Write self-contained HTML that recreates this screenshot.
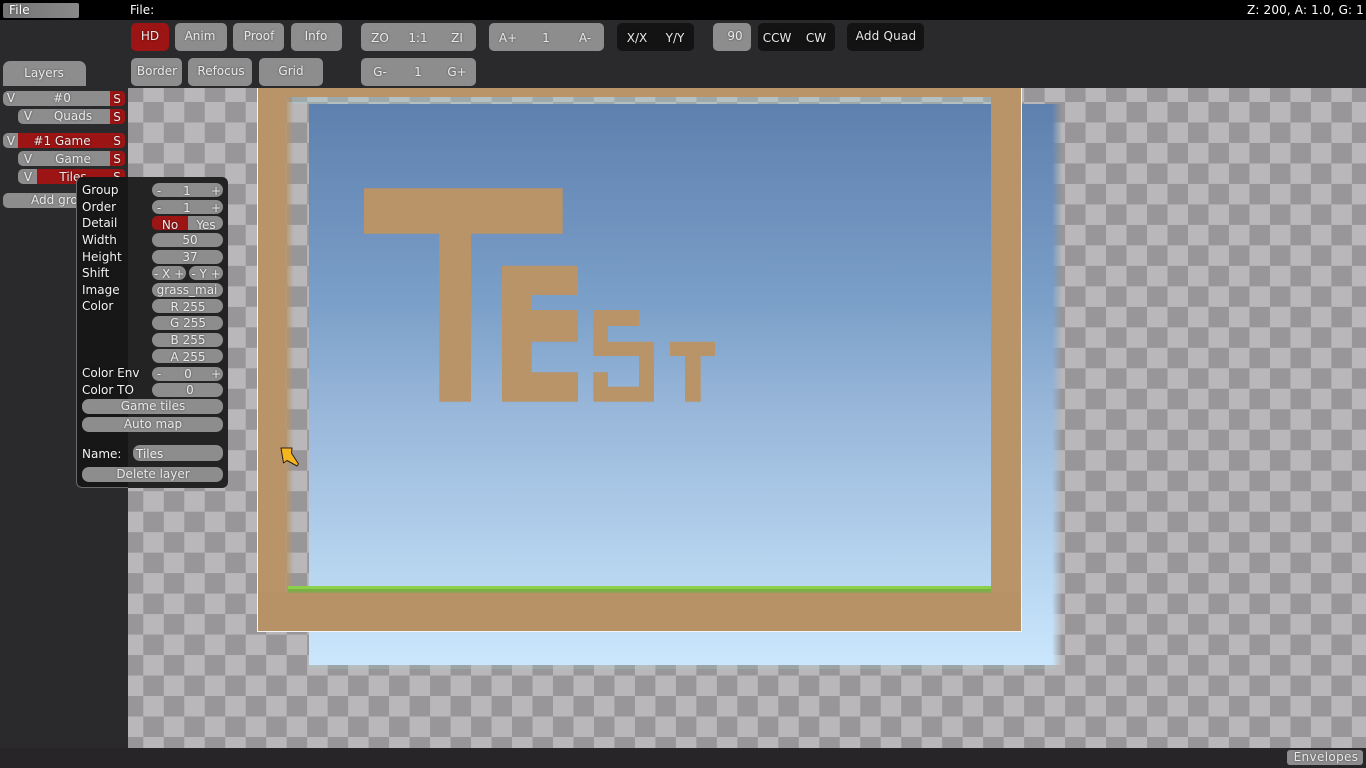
<!DOCTYPE html>
<html><head><meta charset="utf-8"><title>Editor</title>
<style>
html,body{margin:0;padding:0;width:1366px;height:768px;overflow:hidden;background:#2a292b}
body{position:relative;font:12px "DejaVu Sans",sans-serif;color:#e9e9e9}
div{position:absolute;box-sizing:border-box}
.t,.l{position:absolute;white-space:nowrap;line-height:14px;text-shadow:0 0 2px rgba(0,0,0,.55)}
.t{transform:translate(-50%,calc(-50% + 1px))}
.l{transform:translateY(calc(-50% + 1px));color:#f2f2f2}
.g{background:#8e8d8e}.r{background:#9c1414}.k{background:#131314}
.rd{border-radius:5px}.p{border-radius:7px}
</style></head><body>
<div style="left:128px;top:88px;width:1238px;height:660px;background-image:conic-gradient(#b9b7b9 25%,#989698 0 50%,#b9b7b9 0 75%,#989698 0);background-size:40.98px 40.98px;background-position:-5.2px -6.5px"></div>
<div style="left:292px;top:97px;width:699px;height:7px;background:rgba(170,215,215,.3)"></div>
<div style="left:309px;top:664px;width:747px;height:5px;background:rgba(170,215,215,.22)"></div>
<div style="left:309px;top:104px;width:753px;height:561px;background:linear-gradient(#5e80ae 0,#7a9fc8 35%,#96b5d8 53%,#bcd9f3 87%,#cbe7fd 100%);-webkit-mask-image:linear-gradient(to right,#000 calc(100% - 10px),transparent)"></div>
<svg style="position:absolute;left:0;top:0" width="1366" height="768" viewBox="0 0 1366 768">
<defs><linearGradient id="bl"><stop offset="0" stop-color="#b89468"/><stop offset=".74" stop-color="#b89468"/><stop offset="1" stop-color="#b89468" stop-opacity="0"/></linearGradient></defs>
<rect x="258" y="97" width="36" height="496" fill="url(#bl)"/>
<rect x="258" y="88" width="763" height="9" fill="#b89468"/>
<rect x="991" y="88" width="30" height="543" fill="#b89468"/>
<rect x="258" y="592" width="763" height="39" fill="#b79267"/>
<rect x="288" y="586" width="703" height="3" fill="#8ccf4a"/>
<rect x="288" y="589" width="703" height="2.5" fill="#78b044"/>
<rect x="288" y="591.5" width="703" height="1.5" fill="#96a05a"/>
<path d="M257.5 88V631.5H1021.5V88" fill="none" stroke="#f6f6f6" stroke-width="1"/>
<g fill="#b89468">
<path d="M364 188.3H562.7V233.7H471V401.7H439.3V233.7H364Z"/>
<path d="M502 265.7H578V295H531.7V310H578V341.7H531.7V372.3H578V401.7H502Z"/>
<path d="M593.3 310H639V326H608V341.7H654V401.7H593.3V372.3H608V386.7H639V356H593.3Z"/>
<path d="M670 341.7H715V356H700.7V401.7H685V356H670Z"/>
</g>
<path d="M281 448L292 448L291.5 453L298.5 464L297 466L287 460.5L283.5 463Z" fill="#f6b41f" stroke="#2a2215" stroke-width="1" stroke-linejoin="round"/>
</svg>

<div style="left:0;top:0;width:1366px;height:20px;background:#000"></div>
<div style="left:0;top:748px;width:1366px;height:20px;background:#272528"></div>
<div style="left:3px;top:3px;width:76px;height:15px;background:linear-gradient(90deg,#757475,#8a898a);border-radius:2px"></div>
<span class="l" style="left:9px;top:9px;color:#fff;letter-spacing:.2px">File</span>
<span class="l" style="left:130px;top:9px;color:#fff">File:</span>
<span class="l" style="left:1247px;top:9px;color:#fff;letter-spacing:.15px">Z: 200, A: 1.0, G: 1</span>

<div class="r rd" style="left:131px;top:23px;width:38px;height:28px"></div><span class="t" style="left:150px;top:35px">HD</span>
<div class="g rd" style="left:175px;top:23px;width:52px;height:28px"></div><span class="t" style="left:200px;top:35px">Anim</span>
<div class="g rd" style="left:233px;top:23px;width:51px;height:28px"></div><span class="t" style="left:259px;top:35px">Proof</span>
<div class="g rd" style="left:291px;top:23px;width:51px;height:28px"></div><span class="t" style="left:316px;top:35px">Info</span>
<div class="g rd" style="left:131px;top:58px;width:51px;height:28px"></div><span class="t" style="left:157px;top:70px">Border</span>
<div class="g rd" style="left:188px;top:58px;width:64px;height:28px"></div><span class="t" style="left:221px;top:70px">Refocus</span>
<div class="g rd" style="left:259px;top:58px;width:64px;height:28px"></div><span class="t" style="left:291px;top:70px">Grid</span>

<div class="g rd" style="left:361px;top:23px;width:115px;height:28px"></div>
<span class="t" style="left:380px;top:37px">ZO</span><span class="t" style="left:418px;top:37px">1:1</span><span class="t" style="left:457px;top:37px">ZI</span>
<div class="g rd" style="left:361px;top:58px;width:115px;height:28px"></div>
<span class="t" style="left:380px;top:71px">G-</span><span class="t" style="left:418px;top:71px">1</span><span class="t" style="left:457px;top:71px">G+</span>
<div class="g rd" style="left:489px;top:23px;width:115px;height:28px"></div>
<span class="t" style="left:508px;top:37px">A+</span><span class="t" style="left:546px;top:37px">1</span><span class="t" style="left:585px;top:37px">A-</span>
<div class="k rd" style="left:617px;top:23px;width:77px;height:28px"></div>
<span class="t" style="left:637px;top:37px">X/X</span><span class="t" style="left:675px;top:37px">Y/Y</span>
<div class="g rd" style="left:713px;top:23px;width:38px;height:28px"></div><span class="t" style="left:735px;top:35px">90</span>
<div class="k rd" style="left:758px;top:23px;width:77px;height:28px"></div>
<span class="t" style="left:777px;top:37px">CCW</span><span class="t" style="left:816px;top:37px">CW</span>
<div class="k rd" style="left:847px;top:23px;width:77px;height:28px"></div><span class="t" style="left:886px;top:35px;letter-spacing:.2px">Add Quad</span>

<div class="g" style="left:3px;top:61px;width:83px;height:25px;border-radius:7px 7px 0 0"></div><span class="t" style="left:44px;top:72px">Layers</span>

<div class="g rd" style="left:3px;top:91px;width:122px;height:15px"></div><div class="r" style="left:110px;top:91px;width:15px;height:15px;border-radius:0 4px 4px 0"></div>
<span class="t" style="left:11px;top:97px">V</span><span class="t" style="left:62px;top:97px">#0</span><span class="t" style="left:117px;top:98px">S</span>
<div class="g rd" style="left:18px;top:109px;width:107px;height:15px"></div><div class="r" style="left:110px;top:109px;width:15px;height:15px;border-radius:0 4px 4px 0"></div>
<span class="t" style="left:28px;top:115px">V</span><span class="t" style="left:73px;top:115px">Quads</span><span class="t" style="left:117px;top:116px">S</span>
<div class="g rd" style="left:3px;top:133px;width:30px;height:15px"></div><div class="r" style="left:18px;top:133px;width:107px;height:15px;border-radius:0 4px 4px 0"></div>
<span class="t" style="left:11px;top:140px">V</span><span class="t" style="left:62px;top:140px">#1 Game</span><span class="t" style="left:117px;top:140px">S</span>
<div class="g rd" style="left:18px;top:151px;width:107px;height:15px"></div><div class="r" style="left:110px;top:151px;width:15px;height:15px;border-radius:0 4px 4px 0"></div>
<span class="t" style="left:28px;top:158px">V</span><span class="t" style="left:73px;top:158px">Game</span><span class="t" style="left:117px;top:158px">S</span>
<div class="g rd" style="left:18px;top:169px;width:30px;height:15px"></div><div class="r" style="left:37px;top:169px;width:88px;height:15px;border-radius:0 4px 4px 0"></div>
<span class="t" style="left:28px;top:176px">V</span><span class="t" style="left:73px;top:176px">Tiles</span><span class="t" style="left:117px;top:176px">S</span>
<div class="g rd" style="left:3px;top:193px;width:122px;height:15px"></div><span class="t" style="left:62px;top:199px">Add group</span>

<div style="left:76px;top:177px;width:52px;height:311px;background:#171718;border-radius:6px 0 0 6px;border-left:1px solid #6a696a;border-bottom:1px solid #6a696a"></div>
<div style="left:128px;top:177px;width:100px;height:311px;background:#232324;border-radius:0 6px 6px 0"></div>

<span class="l" style="left:82px;top:189px">Group</span><div class="g p" style="left:152px;top:183px;width:71px;height:14px"></div>
<span class="t" style="left:159px;top:190px">-</span><span class="t" style="left:187px;top:190px">1</span><span class="t" style="left:216px;top:190px">+</span>
<span class="l" style="left:82px;top:206px">Order</span><div class="g p" style="left:152px;top:200px;width:71px;height:14px"></div>
<span class="t" style="left:159px;top:207px">-</span><span class="t" style="left:187px;top:207px">1</span><span class="t" style="left:216px;top:207px">+</span>
<span class="l" style="left:82px;top:222px">Detail</span><div class="g p" style="left:152px;top:216px;width:71px;height:14px"></div><div class="r" style="left:152px;top:216px;width:36px;height:14px;border-radius:5px 0 0 5px"></div>
<span class="t" style="left:170px;top:224px">No</span><span class="t" style="left:206px;top:224px">Yes</span>
<span class="l" style="left:82px;top:239px">Width</span><div class="g p" style="left:152px;top:233px;width:71px;height:14px"></div><span class="t" style="left:190px;top:239px">50</span>
<span class="l" style="left:82px;top:256px">Height</span><div class="g p" style="left:152px;top:250px;width:71px;height:14px"></div><span class="t" style="left:190px;top:256px">37</span>
<span class="l" style="left:82px;top:272px">Shift</span><div class="g p" style="left:152px;top:266px;width:34px;height:14px"></div><div class="g p" style="left:189px;top:266px;width:34px;height:14px"></div>
<span class="t" style="left:169px;top:273px">- X +</span><span class="t" style="left:206px;top:273px">- Y +</span>
<span class="l" style="left:82px;top:289px">Image</span><div class="g p" style="left:152px;top:283px;width:71px;height:14px"></div><span class="t" style="left:187px;top:289px">grass_mai</span>
<span class="l" style="left:82px;top:305px">Color</span><div class="g p" style="left:152px;top:299px;width:71px;height:14px"></div><span class="t" style="left:188px;top:306px">R 255</span>
<div class="g p" style="left:152px;top:316px;width:71px;height:14px"></div><span class="t" style="left:188px;top:322px">G 255</span>
<div class="g p" style="left:152px;top:333px;width:71px;height:14px"></div><span class="t" style="left:188px;top:339px">B 255</span>
<div class="g p" style="left:152px;top:349px;width:71px;height:14px"></div><span class="t" style="left:188px;top:356px">A 255</span>
<span class="l" style="left:82px;top:372px">Color Env</span><div class="g p" style="left:152px;top:367px;width:71px;height:14px"></div>
<span class="t" style="left:159px;top:373px">-</span><span class="t" style="left:188px;top:373px">0</span><span class="t" style="left:216px;top:373px">+</span>
<span class="l" style="left:82px;top:389px">Color TO</span><div class="g p" style="left:152px;top:383px;width:71px;height:14px"></div><span class="t" style="left:190px;top:389px">0</span>
<div class="g p" style="left:82px;top:399px;width:141px;height:15px"></div><span class="t" style="left:153px;top:405px">Game tiles</span>
<div class="g p" style="left:82px;top:417px;width:141px;height:15px"></div><span class="t" style="left:153px;top:423px">Auto map</span>
<span class="l" style="left:82px;top:453px">Name:</span><div class="g p" style="left:133px;top:445px;width:90px;height:16px"></div><span class="l" style="left:136px;top:453px">Tiles</span>
<div class="g p" style="left:82px;top:467px;width:141px;height:15px"></div><span class="t" style="left:153px;top:473px">Delete layer</span>

<div class="g" style="left:1287px;top:750px;width:76px;height:15px;border-radius:3px"></div><span class="t" style="left:1326px;top:756px;letter-spacing:.35px">Envelopes</span>
</body></html>
